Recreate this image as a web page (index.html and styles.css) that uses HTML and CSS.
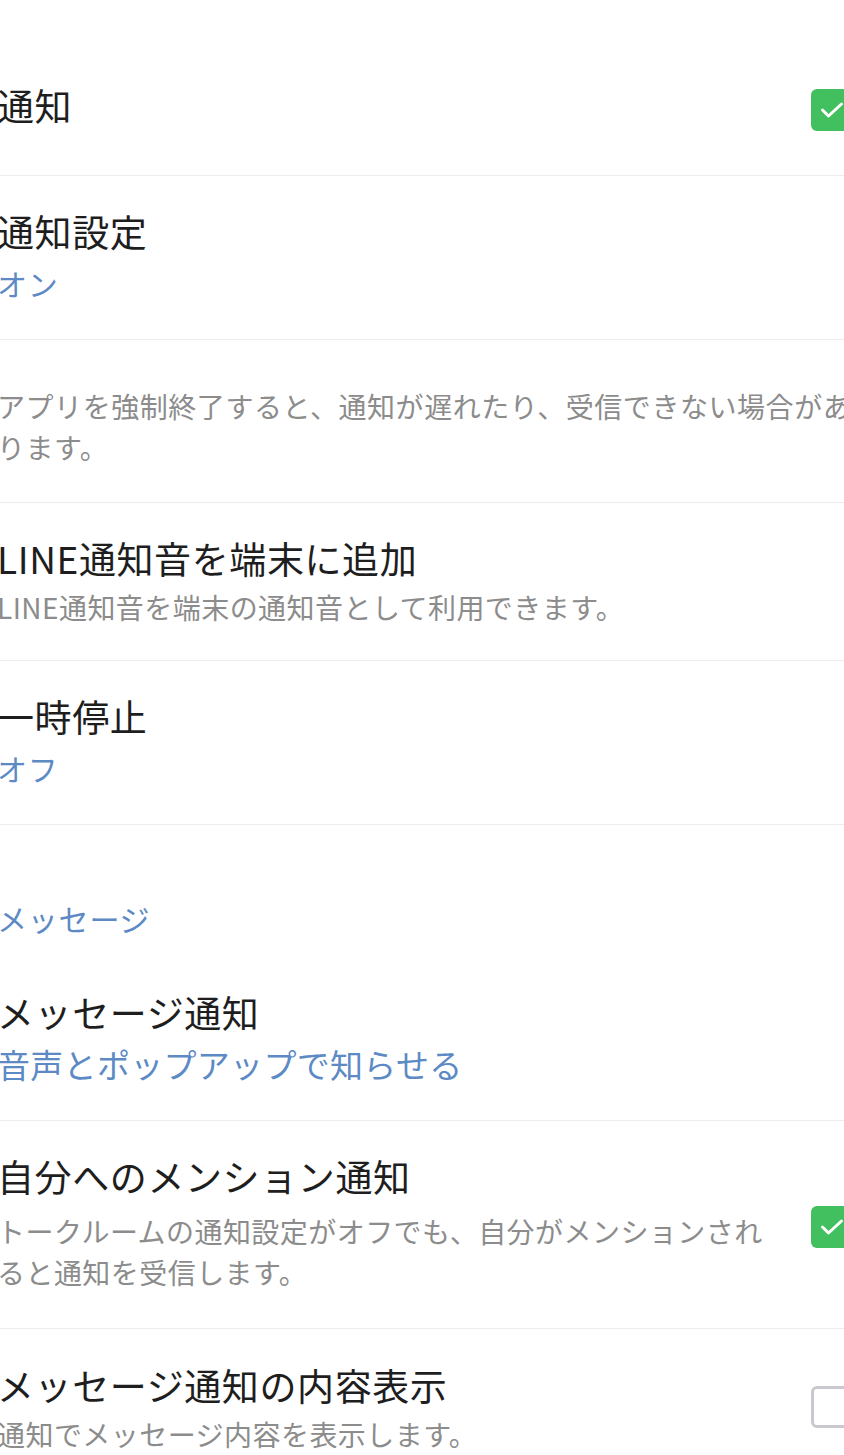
FILE: index.html
```html
<!DOCTYPE html>
<html lang="ja">
<head>
<meta charset="utf-8">
<title>通知</title>
<link rel="stylesheet" href="styles.css">
</head>
<body>
<main class="settings">
  <div class="row row-first">
    <div class="text"><div class="title">通知</div></div>
    <span class="check on check-first"><svg viewBox="0 0 42 42"><path d="M11.5 21l6 6L30.5 15"/></svg></span>
  </div>
  <div class="row">
    <div class="text">
      <div class="title">通知設定</div>
      <div class="value">オン</div>
    </div>
  </div>
  <div class="row row-note">
    <div class="text"><div class="desc">アプリを強制終了すると、通知が遅れたり、受信できない場合があ<br>ります。</div></div>
  </div>
  <div class="row row-sound">
    <div class="text">
      <div class="title">LINE通知音を端末に追加</div>
      <div class="desc">LINE通知音を端末の通知音として利用できます。</div>
    </div>
  </div>
  <div class="row">
    <div class="text">
      <div class="title">一時停止</div>
      <div class="value">オフ</div>
    </div>
  </div>
  <div class="section">メッセージ</div>
  <div class="row row-msg">
    <div class="text">
      <div class="title">メッセージ通知</div>
      <div class="value value-lg">音声とポップアップで知らせる</div>
    </div>
  </div>
  <div class="row row-mention">
    <div class="text">
      <div class="title">自分へのメンション通知</div>
      <div class="desc">トークルームの通知設定がオフでも、自分がメンションされ<br>ると通知を受信します。</div>
    </div>
    <span class="check on check-mention"><svg viewBox="0 0 42 42"><path d="M11.5 21l6 6L30.5 15"/></svg></span>
  </div>
  <div class="row row-last">
    <div class="text">
      <div class="title">メッセージ通知の内容表示</div>
      <div class="desc">通知でメッセージ内容を表示します。</div>
    </div>
    <span class="check off"></span>
  </div>
</main>
</body>
</html>
```
FILE: styles.css
```css
html, body {
  margin: 0;
  padding: 0;
  background: #ffffff;
  overflow: hidden;
}
body {
  width: 844px;
  height: 1455px;
  font-family: "Noto Sans CJK JP", "Noto Sans", sans-serif;
}
.settings {
  margin-left: -3px;
  width: 856px;
}
.row {
  display: flex;
  align-items: center;
  padding: 29px 0 30px;
  border-bottom: 1px solid #ececec;
}
.text {
  flex: 1;
  min-width: 0;
}
.title {
  font-size: 37px;
  line-height: 52px;
  letter-spacing: 0.6px;
  color: #1e1e1e;
  white-space: nowrap;
}
.value {
  font-size: 30px;
  line-height: 52px;
  letter-spacing: 0.8px;
  color: #5d8ac4;
  white-space: nowrap;
}
.value-lg {
  font-size: 33px;
  letter-spacing: 0.3px;
}
.desc {
  font-size: 28px;
  line-height: 41px;
  letter-spacing: 0.45px;
  margin-top: 3px;
  color: #8c8c8c;
  white-space: nowrap;
}
.row-first {
  padding: 79px 0 44px;
}
.row-note {
  padding: 46px 0 34px;
}
.row-note .desc {
  margin-top: 0;
  letter-spacing: 0.55px;
}
.row-sound {
  padding-bottom: 32px;
}
.section {
  font-size: 30px;
  line-height: 44px;
  letter-spacing: 0.8px;
  color: #5d8ac4;
  padding: 71px 0 0;
}
.row-msg {
  padding-top: 46px;
}
.row-mention {
  padding-bottom: 35px;
}
.row-mention .desc {
  margin-top: 9px;
}
.row-last {
  padding-top: 30px;
  border-bottom: none;
}
.check {
  flex-shrink: 0;
  width: 42px;
  height: 42px;
  box-sizing: border-box;
  border-radius: 6px;
  margin-left: 20px;
  display: flex;
  align-items: center;
  justify-content: center;
}
.check-first {
  margin-top: 9px;
}
.check-mention {
  margin-top: 10px;
}
.check.on {
  background: #42bf5e;
}
.check.off {
  border: 3px solid #c8c8ce;
  background: #fff;
}
.check svg {
  width: 42px;
  height: 42px;
}
.check path {
  fill: none;
  stroke: #ffffff;
  stroke-width: 3;
  stroke-linecap: round;
  stroke-linejoin: round;
}
```
